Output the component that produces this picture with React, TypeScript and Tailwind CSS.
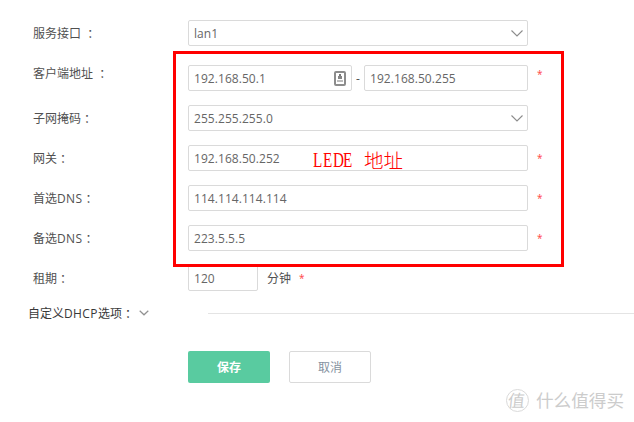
import type { ReactNode } from "react";

function Label({ children, gap = false }: { children: ReactNode; gap?: boolean }) {
  return (
    <span className="flex w-[155px] shrink-0 items-center whitespace-pre pt-0.5">
      {children}
      {gap ? " " : ""}
      <span className="font-['Noto_Sans_CJK_JP',sans-serif]">：</span>
    </span>
  );
}

function Field({ value, className = "w-[340px]", children }: { value: string; className?: string; children?: ReactNode }) {
  return (
    <div className={`flex h-[26px] shrink-0 items-center justify-between rounded-[2px] border border-[#dadada] bg-white pl-[5px] pr-1 text-[#666] ${className}`}>
      <span className="pt-0.5 tracking-[0.06px]">{value}</span>
      {children}
    </div>
  );
}

function Chevron({ small = false }: { small?: boolean }) {
  return small ? (
    <svg width="10" height="6" viewBox="0 0 10 6" fill="none" stroke="#929292" strokeWidth="1.2">
      <path d="M.7.7 5 4.8 9.3.7" />
    </svg>
  ) : (
    <svg width="12" height="8" viewBox="0 0 12 8" fill="none" stroke="#8c8c8c" strokeWidth="1.1">
      <path d="M.5 1.5 6 7 11.5 1.5" />
    </svg>
  );
}

function AutofillIcon() {
  return (
    <svg className="mr-px" width="12" height="15" viewBox="0 0 12 15">
      <rect x="1" y="1" width="10" height="13" rx="1" fill="#fff" stroke="#8c8c8c" strokeWidth="2" />
      <rect x="5" y="3" width="2" height="3" fill="#777" />
      <path d="M4 5h4v3H4z" fill="#858585" />
      <path d="M3 9h6v2H3z" fill="#bcbcbc" />
    </svg>
  );
}

function Star({ className = "ml-[9px]" }: { className?: string }) {
  return <span className={`font-['Noto_Sans',sans-serif] text-[10px] text-[#ff5050] ${className}`}>*</span>;
}

function Latin({ children }: { children: ReactNode }) {
  return <span className="tracking-[0.4px]">{children}</span>;
}

export default function App() {
  return (
    <main className="relative h-[422px] w-[634px] overflow-hidden bg-white pt-5 font-['Open_Sans','Noto_Sans_CJK_SC',sans-serif] text-[12px] leading-[18px] text-[#505050]">
      <form className="flex flex-col pl-[33px]">
        <div className="flex h-[26px] items-center">
          <Label gap>服务接口</Label>
          <Field value="lan1"><Chevron /></Field>
        </div>
        <div className="mt-[19px] flex h-[26px] items-center">
          <div className="-mt-2.5"><Label gap>客户端地址</Label></div>
          <Field value="192.168.50.1" className="w-[164px]"><AutofillIcon /></Field>
          <span className="w-3 pt-0.5 text-center">-</span>
          <Field value="192.168.50.255" className="w-[164px]" />
          <Star className="-mt-2 ml-[9px]" />
        </div>
        <div className="mt-3.5 flex flex-col gap-3.5">
          <div className="flex h-[26px] items-center">
            <Label>子网掩码</Label>
            <Field value="255.255.255.0"><Chevron /></Field>
          </div>
          <div className="flex h-[26px] items-center">
            <Label>网关</Label>
            <Field value="192.168.50.252" />
            <Star />
          </div>
          <div className="flex h-[26px] items-center">
            <Label>首选<Latin>DNS</Latin></Label>
            <Field value="114.114.114.114" />
            <Star />
          </div>
          <div className="flex h-[26px] items-center">
            <Label>备选<Latin>DNS</Latin></Label>
            <Field value="223.5.5.5" />
            <Star />
          </div>
          <div className="flex h-[26px] items-center">
            <Label>租期</Label>
            <Field value="120" className="w-[70px]" />
            <span className="ml-[9px] pt-0.5">分钟</span>
            <Star className="ml-2" />
          </div>
        </div>
      </form>

      <div className="mt-[13px] flex h-[18px] items-center pl-7 text-[#383838]">
        <div className="flex w-[180px] shrink-0 items-center">
          <span className="pt-0.5">自定义<Latin>DHCP</Latin>选项</span>
          <span className="pt-0.5 font-['Noto_Sans_CJK_JP',sans-serif]">：</span>
          <span className="ml-[5px]"><Chevron small /></span>
        </div>
        <div className="h-px flex-1 bg-[#e4e4e4]" />
      </div>

      <div className="mt-[29px] flex gap-[19px] pl-[188px]">
        <button className="h-8 w-[82px] rounded-[2px] bg-[#59cba0] pt-0.5 font-semibold text-white">保存</button>
        <button className="h-8 w-[82px] rounded-[2px] border border-[#dadada] bg-white pt-0.5 text-[#8592a0]">取消</button>
      </div>

      <div className="pointer-events-none absolute left-[173px] top-[51px] h-[216px] w-[391px] border-[3px] border-[#f00]" />
      <div className="absolute left-[313px] top-[148px] flex h-6 items-center gap-[11px] text-[20px] leading-6 text-[#f00]">
        <span className="flex w-10 font-['Liberation_Serif',serif]">
          {["L", "E", "D", "E"].map((letter, index) => (
            <span key={index} className="w-[10px] origin-left scale-x-[0.76]">{letter}</span>
          ))}
        </span>
        <span className="font-['Noto_Sans_CJK_SC',sans-serif] text-[19.5px] font-light">地址</span>
      </div>

      <div className="absolute left-[506px] top-[388px] flex h-6 items-center gap-[7px] font-['Noto_Sans_CJK_SC',sans-serif] text-[#ccc]">
        <span className="flex size-[23px] items-center justify-center rounded-full border border-[#dadada]">
          <span className="-translate-x-px -skew-x-6 text-[17px] leading-5">值</span>
        </span>
        <span className="text-[17.6px] leading-6">什么值得买</span>
      </div>
    </main>
  );
}
